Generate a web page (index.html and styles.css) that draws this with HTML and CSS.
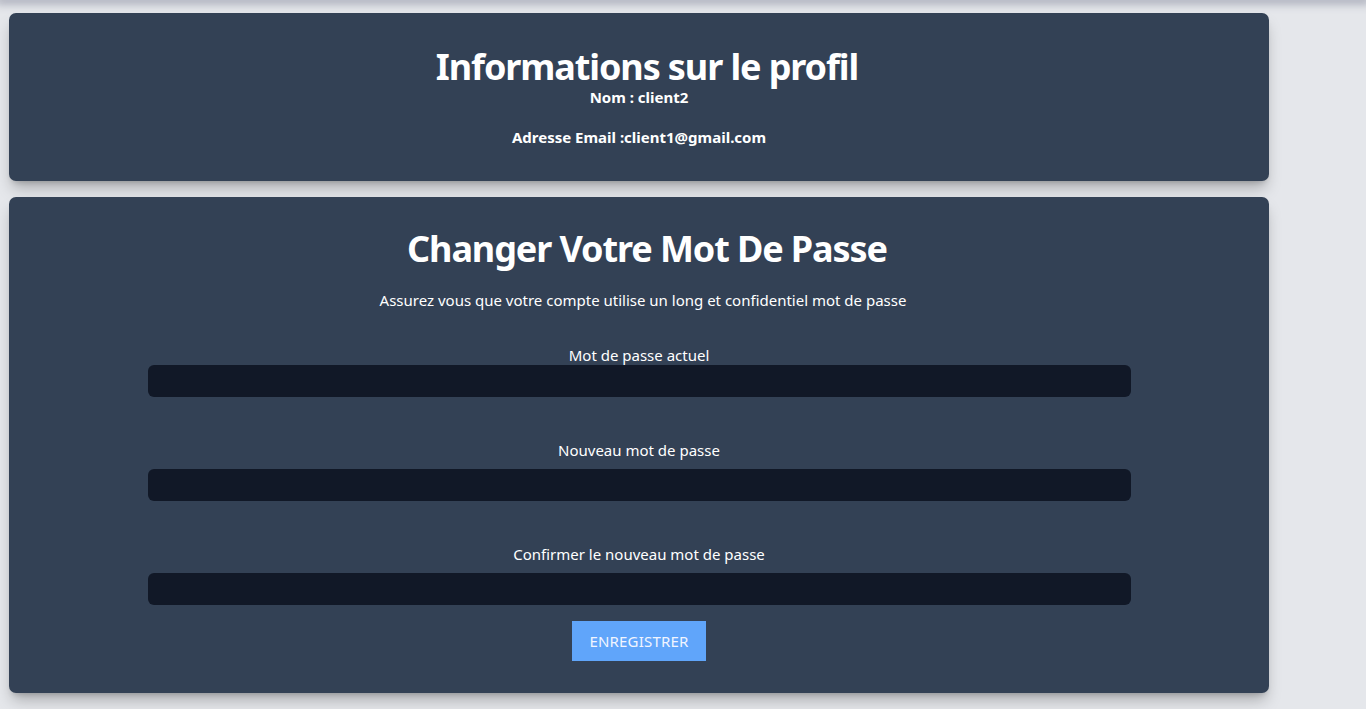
FILE: index.html
```html
<!DOCTYPE html>
<html lang="fr">
<head>
<meta charset="utf-8">
<title>Profil</title>
<link rel="stylesheet" href="styles.css">
</head>
<body>
<div class="topbar"></div>
<main class="page">
  <section class="card card-info">
    <h1 class="title">Informations sur le profil</h1>
    <p class="info-line">Nom : client2</p>
    <p class="info-line info-email">Adresse Email :client1@gmail.com</p>
  </section>
  <section class="card card-pass">
    <h2 class="title">Changer Votre Mot De Passe</h2>
    <p class="subtitle">Assurez vous que votre compte utilise un long et confidentiel mot de passe</p>
    <form class="form">
      <div class="field field-first">
        <label class="label" for="cur">Mot de passe actuel</label>
        <input class="input" id="cur" type="password">
      </div>
      <div class="field">
        <label class="label" for="new">Nouveau mot de passe</label>
        <input class="input" id="new" type="password">
      </div>
      <div class="field">
        <label class="label" for="conf">Confirmer le nouveau mot de passe</label>
        <input class="input" id="conf" type="password">
      </div>
      <button class="btn" type="button">ENREGISTRER</button>
    </form>
  </section>
</main>
</body>
</html>
```

FILE: styles.css
```css
html, body {
  margin: 0;
  padding: 0;
}
body {
  background: #e5e7eb;
  font-family: "Noto Sans", "Open Sans", sans-serif;
  color: #ffffff;
  height: 709px;
  overflow: hidden;
}
.topbar {
  height: 0;
  box-shadow: 0 0 8px 4px rgba(90, 96, 120, 0.45);
}
.page {
  width: 1260px;
  padding: 13px 0 0 9px;
  display: flex;
  flex-direction: column;
  gap: 16px;
}
.card {
  background: #334155;
  border-radius: 7px;
  box-shadow: 0 10px 15px -3px rgba(0,0,0,0.25), 0 4px 6px -4px rgba(0,0,0,0.25);
  text-align: center;
  box-sizing: border-box;
}
.card-info {
  height: 168px;
  padding-top: 35px;
}
.card-pass {
  height: 496px;
  padding-top: 33px;
  display: flex;
  flex-direction: column;
  align-items: center;
}
.title {
  margin: 0;
  font-size: 36px;
  line-height: 38px;
  font-weight: 700;
  letter-spacing: -1.1px;
  padding-left: 16px;
}
.card-info .info-line:first-of-type {
  margin-top: 1px;
}
.info-line {
  margin: 0;
  font-size: 15px;
  line-height: 20px;
  font-weight: 700;
}
.info-email {
  margin-top: 20px;
}
.subtitle {
  margin: 22px 0 0;
  font-size: 15px;
  line-height: 20px;
  padding-left: 8px;
}
.form {
  width: 983px;
  margin-top: 35px;
  display: flex;
  flex-direction: column;
  align-items: center;
}
.field {
  width: 100%;
  display: flex;
  flex-direction: column;
  align-items: center;
  margin-top: 43px;
}
.field-first {
  margin-top: 0;
}
.label {
  font-size: 15px;
  line-height: 20px;
  margin-bottom: 9px;
}
.field-first .label {
  margin-bottom: 0;
}
.input {
  width: 100%;
  height: 32px;
  box-sizing: border-box;
  border: none;
  border-radius: 6px;
  background: #111827;
  outline: none;
}
.btn {
  margin-top: 16px;
  width: 134px;
  height: 40px;
  border: none;
  background: #60a5fa;
  color: #f1f5ff;
  font-family: inherit;
  font-size: 15px;
  letter-spacing: 0.2px;
}
```
